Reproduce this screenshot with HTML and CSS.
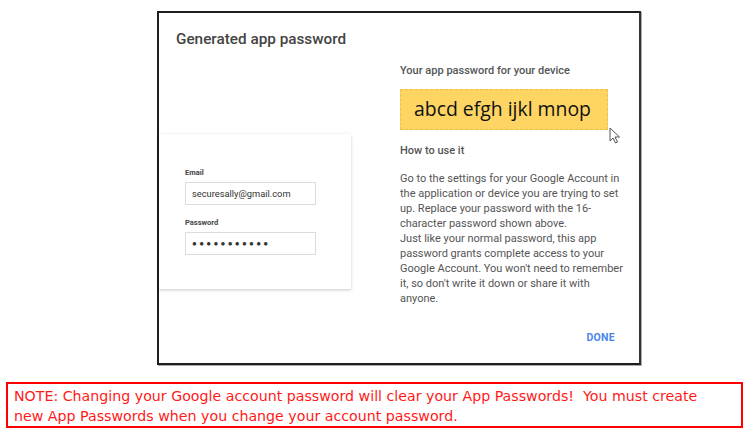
FILE: index.html
```html
<!DOCTYPE html>
<html>
<head>
<meta charset="utf-8">
<link rel="stylesheet" href="styles.css">
</head>
<body>
<div class="frame">
  <h1 class="title">Generated app password</h1>
  <div class="content">
    <div class="card">
      <div class="field">
        <div class="label">Email</div>
        <div class="input">securesally@gmail.com</div>
      </div>
      <div class="field">
        <div class="label">Password</div>
        <div class="input dots">●●●●●●●●●●●</div>
      </div>
    </div>
    <div class="info">
      <div class="subhead">Your app password for your device</div>
      <div class="pwbox-wrap">
        <div class="pwbox">abcd efgh ijkl mnop</div>
        <svg class="cursor" width="12" height="17" viewBox="0 0 12 17"><path d="M1 1 L1 14 L4 11 L6.5 16 L8.5 15 L6 10 L10.5 10 Z" fill="#fff" stroke="#555" stroke-width="1"/></svg>
      </div>
      <div class="subhead how">How to use it</div>
      <p class="para">Go to the settings for your Google Account in the application or device you are trying to set up. Replace your password with the 16-character password shown above.<br>Just like your normal password, this app password grants complete access to your Google Account. You won't need to remember it, so don't write it down or share it with anyone.</p>
      <div class="actions"><span class="done">DONE</span></div>
    </div>
  </div>
</div>
<div class="note">NOTE: Changing your Google account password will clear your App Passwords!&nbsp; You must create new App Passwords when you change your account password.</div>
</body>
</html>
```
FILE: styles.css
```css
html, body {
  margin: 0;
  padding: 0;
  background: #fff;
}
body {
  width: 751px;
  height: 434px;
  overflow: hidden;
  font-family: Roboto, "Liberation Sans", sans-serif;
}
.frame {
  margin: 11px 0 0 157px;
  width: 480px;
  height: 350px;
  border: 2px solid #1e1e1e;
  border-right-color: #333;
  box-shadow: 1px 1px 0 #aaa;
  display: flex;
  flex-direction: column;
}
.title {
  margin: 16px 0 0 17px;
  font-size: 15.3px;
  line-height: 20px;
  font-weight: 500;
  color: #444;
}
.content {
  display: flex;
  align-items: flex-start;
}
.card {
  margin-top: 85px;
  width: 192px;
  height: 155px;
  box-shadow: 0 1px 3px rgba(0,0,0,0.22);
  box-sizing: border-box;
  padding: 34px 0 0 26px;
  display: flex;
  flex-direction: column;
  gap: 13px;
}
.label {
  font-size: 7.5px;
  font-weight: 700;
  color: #444;
  line-height: 10px;
  margin-bottom: 4px;
}
.input {
  width: 131px;
  height: 23px;
  box-sizing: border-box;
  border: 1px solid #dcdcdc;
  font-size: 9.3px;
  line-height: 21px;
  padding-left: 6px;
  color: #333;
}
.dots {
  font-size: 8px;
  letter-spacing: 2.3px;
  color: #333;
}
.info {
  margin-left: 49px;
  margin-top: 14px;
  width: 224px;
}
.subhead {
  font-size: 11px;
  line-height: 16px;
  font-weight: 500;
  color: #555;
}
.pwbox-wrap {
  position: relative;
  margin-top: 10px;
}
.pwbox {
  width: 208px;
  height: 41px;
  box-sizing: border-box;
  background: #fed563;
  border: 1px dashed #f2c04a;
  font-family: "Open Sans", "DejaVu Sans", sans-serif;
  font-size: 19.4px;
  line-height: 38px;
  padding-left: 13px;
  color: #111;
}
.cursor {
  position: absolute;
  left: 209px;
  top: 38px;
}
.how {
  margin-top: 13px;
}
.para {
  margin: 12px 0 0 0;
  font-size: 11px;
  line-height: 15px;
  color: #555;
}
.actions {
  display: flex;
  justify-content: flex-end;
  padding-right: 9px;
  margin-top: 25px;
}
.done {
  font-size: 10.5px;
  font-weight: 700;
  color: #4a86e8;
  letter-spacing: 0.3px;
}
.note {
  margin: 17px 0 0 6px;
  width: 737px;
  height: 46px;
  box-sizing: border-box;
  border: 2px solid #ff0000;
  color: #ff1a1a;
  font-family: "DejaVu Sans", sans-serif;
  font-size: 14.2px;
  line-height: 20px;
  padding: 2px 34px 0 6px;
}
```
